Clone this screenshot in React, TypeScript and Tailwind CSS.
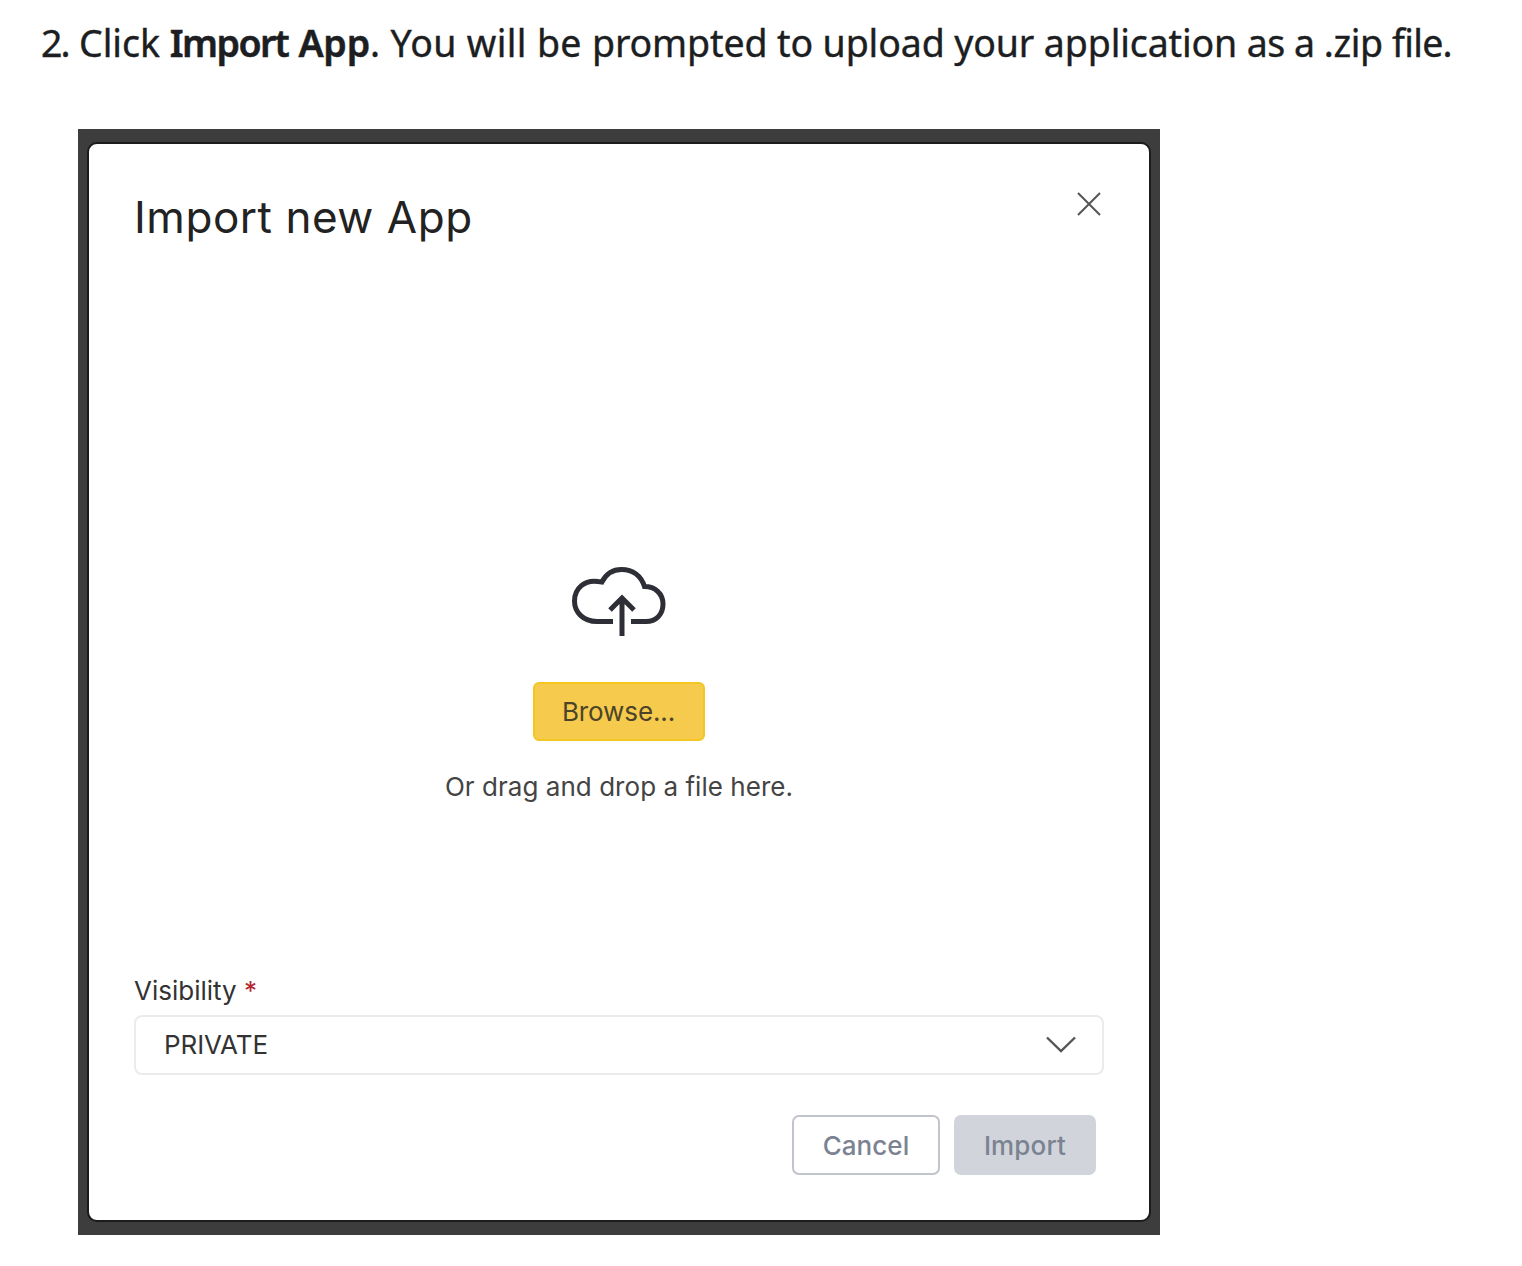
function StepText() {
  return (
    <ol className="h-[129px] pl-[41px] pt-[15px] font-['Noto_Sans','Liberation_Sans',sans-serif] text-[37.5px] leading-[56px] text-[#1c1e21]">
      <li className="flex whitespace-pre [-webkit-text-stroke:0.4px_#1c1e21]">
        <span className="w-[38px] tracking-[-2px]">2.</span>
        <p>
          <span>Click </span>
          <strong className="font-semibold [-webkit-text-stroke:0.5px_#1c1e21]">
            <span className="mr-[2px] tracking-[-1.6px]">Import </span>
            <span className="tracking-[-0.2px]">App</span>
          </strong>
          <span className="tracking-[0.36px]">. You will be </span>
          <span className="tracking-[-0.12px]">prompted to upload your application </span>
          <span className="tracking-[-0.5px]">as a </span>
          <span className="tracking-[-0.4px]">.zip </span>
          <span className="tracking-[-0.7px]">file.</span>
        </p>
      </li>
    </ol>
  );
}

function CloseIcon() {
  return (
    <svg width="26" height="26" viewBox="0 0 26 26" fill="none" stroke="#555" strokeWidth="2">
      <path d="M2 2 24 24M24 2 2 24" />
    </svg>
  );
}

function CloudUpload() {
  return (
    <svg width="100" height="76" viewBox="570 563 100 76" fill="none" stroke="#2d2e36" strokeWidth="5">
      <path d="M613 621.5H597C583 621.5 574.5 612 574.5 601C574.5 588 585 579.5 598 581.5L602 582C606 574 613 569.5 621.5 569.5C633 569.5 641 576 644.500 586.500C655 586.500 663 593.500 663 604C663 614.500 656 621.500 646 621.500H631" />
      <path d="M622 636V599M610 610 622 598 634 610" />
    </svg>
  );
}

function ChevronIcon() {
  return (
    <svg width="32" height="20" viewBox="0 0 32 20" fill="none" stroke="#555" strokeWidth="2.4">
      <path d="M2 2.500 16 16 30 2.500" />
    </svg>
  );
}

export default function App() {
  return (
    <main className="h-[1266px] w-[1522px] overflow-hidden bg-white">
      <StepText />
      <div className="ml-[78px] h-[1106px] w-[1082px] bg-[#3d3d3d] pl-[9px] pt-[13px] font-['Inter','Liberation_Sans',sans-serif]">
        <section className="flex h-[1080px] w-[1064px] flex-col rounded-[10px] border-2 border-[#1b1b1b] bg-white pl-[45px] pr-[44px]">
          <header className="flex h-[108px] items-start justify-between">
            <h1 className="mt-[46px] whitespace-nowrap text-[44px] leading-[54px] font-normal tracking-[0.53px] text-[#222]">Import new App</h1>
            <button aria-label="Close" className="mr-[3px] mt-[47px]"><CloseIcon /></button>
          </header>
          <div className="flex h-[717px] flex-col items-center pt-[311px]">
            <CloudUpload />
            <button className="mr-[2px] mt-[43px] h-[59px] w-[172px] rounded-[6px] border-2 border-[#f3c621] bg-[#f6ca4d] text-[26px] leading-none tracking-[-0.1px] text-[#4b4429]">Browse...</button>
            <p className="mr-[1px] mt-[28px] whitespace-nowrap text-[26px] leading-[36px] tracking-[0.04px] text-[#444]">Or drag and drop a file here.</p>
          </div>
          <label className="h-[46px] pt-[4px] text-[26px] leading-[36px] text-[#333]">
            Visibility <span className="text-[#b3262e]">*</span>
          </label>
          <div className="flex h-[60px] w-[970px] items-center justify-between rounded-[8px] border-2 border-[#e9ebed] pl-[28px] pr-[25px] pb-[1px] text-[26px] tracking-[-0.1px] text-[#333]">
            PRIVATE
            <ChevronIcon />
          </div>
          <footer className="mt-[40px] flex justify-end gap-[14px] pr-[9px] text-[26px] font-medium text-[#7b8291]">
            <button className="h-[60px] w-[148px] rounded-[7px] border-2 border-[#c1c4ca] tracking-[0.05px]">Cancel</button>
            <button className="h-[60px] w-[142px] rounded-[7px] bg-[#d1d5db] tracking-[0.15px]">Import</button>
          </footer>
        </section>
      </div>
    </main>
  );
}
